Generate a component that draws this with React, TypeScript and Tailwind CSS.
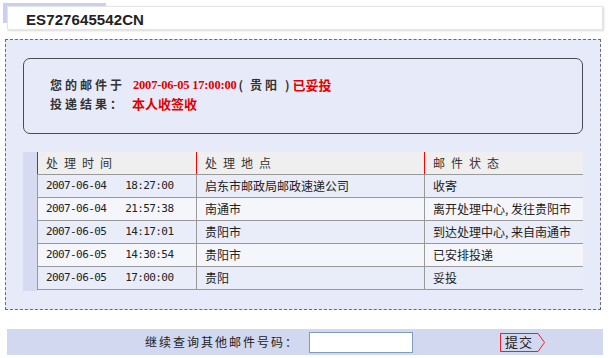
import React from "react";

const cjk = '"Noto Sans CJK SC", "DejaVu Sans", sans-serif';

const rows = [
  ["2007-06-04", "18:27:00", "启东市邮政局邮政速递公司", "收寄"],
  ["2007-06-04", "21:57:38", "南通市", "离开处理中心, 发往贵阳市"],
  ["2007-06-05", "14:17:01", "贵阳市", "到达处理中心, 来自南通市"],
  ["2007-06-05", "14:30:54", "贵阳市", "已安排投递"],
  ["2007-06-05", "17:00:00", "贵阳", "妥投"],
];

export default function App() {
  return (
    <div className="w-[609px] h-[358px] bg-white relative overflow-hidden" style={{ fontFamily: cjk }}>
      {/* header */}
      <div className="relative h-[39px]">
        <div className="absolute left-[3px] top-[3px] w-[103px] h-[20px] bg-[#c9cff0]" />
        <div className="absolute left-[7px] top-[6px] w-[596px] h-[24px] bg-white border border-[#e4e4e4] shadow-[1px_1px_2px_#d8d8d8] flex items-center pl-[18px] pt-[4px]">
          <span className="text-[15px] font-bold text-[#222] tracking-[0.1px]" style={{ fontFamily: '"Liberation Sans", Arial, sans-serif' }}>
            ES727645542CN
          </span>
        </div>
      </div>

      {/* dashed box */}
      <div className="ml-[5px] w-[596px] h-[271px] border border-dashed border-[#6b6b6b] bg-[#e7eaf8] pt-[18px] pl-[17px]">
        <div className="w-[560px] h-[76px] border border-[#4d4a52] rounded-[7px] pl-[26px] pt-[17px] text-[12px] font-bold text-[#333]">
          <div className="flex items-center h-[18px] whitespace-nowrap">
            <span className="tracking-[3px]">您的邮件于</span>
            <span className="ml-[8px] text-[#e00000] text-[12.5px] tracking-[-0.2px]" style={{ fontFamily: '"Liberation Serif", "Times New Roman", serif' }}>
              2007-06-05 17:00:00
            </span>
            <span className="ml-[2px]">(</span>
            <span className="ml-[7px] tracking-[3px]">贵阳</span>
            <span className="ml-[5px]">)</span>
            <span className="ml-[3px] text-[#e00000] text-[13px]">已妥投</span>
          </div>
          <div className="flex items-center h-[18px] mt-[1px] whitespace-nowrap">
            <span className="tracking-[3px]">投递结果：</span>
            <span className="ml-[7px] text-[#e00000] text-[13px]">本人收签收</span>
          </div>
        </div>

        <div className="flex mt-[18px]">
          <div className="w-[14px] h-[139px] bg-[#d6dbf1]" />
          <div className="w-[546px] text-[12px] text-[#222]">
            <div className="flex h-[23px] bg-[#efefef] border-b border-[#999]">
              <div className="w-[159px] border-l border-[#ff0000] pl-[8px] flex items-center tracking-[6px] text-[#333]">处理时间</div>
              <div className="w-[228px] border-l border-[#ff0000] pl-[8px] flex items-center tracking-[6px] text-[#333]">处理地点</div>
              <div className="flex-1 border-l border-[#ff0000] pl-[8px] flex items-center tracking-[6px] text-[#333]">邮件状态</div>
            </div>
            {rows.map((r, i) => (
              <div key={i} className={`flex h-[23px] border-b border-[#999] ${i % 2 === 0 ? "bg-[#e9ecf9]" : "bg-[#f5f6fc]"}`}>
                <div className="w-[159px] border-l border-[#999] pl-[8px] flex items-center" style={{ fontFamily: '"DejaVu Sans Mono", monospace', fontSize: "11px" }}>
                  <span className="tracking-[-0.6px]">{r[0]}</span>
                  <span className="ml-[19px] tracking-[-0.6px]">{r[1]}</span>
                </div>
                <div className="w-[228px] border-l border-[#999] pl-[8px] flex items-center">{r[2]}</div>
                <div className="flex-1 border-l border-[#999] pl-[8px] flex items-center whitespace-nowrap">{r[3]}</div>
              </div>
            ))}
          </div>
        </div>
      </div>

      {/* bottom bar */}
      <div className="ml-[7px] mt-[19px] w-[596px] h-[26px] bg-[#d1d8f0] flex items-center text-[12px] text-[#222]">
        <span className="ml-[138px] tracking-[2px]">继续查询其他邮件号码：</span>
        <div className="ml-[10px] w-[104px] h-[21px] bg-white border border-[#7f9db9]" />
        <div className="ml-[87px] relative w-[46px] h-[19px] flex items-center pl-[5px] tracking-[1px] text-[13px]">
          <svg className="absolute left-0 top-0" width="46" height="19" viewBox="0 0 46 19">
            <polygon points="0.5,0.5 38,0.5 44.5,9.5 38,18.5 0.5,18.5" fill="none" stroke="#e8202a" strokeWidth="1" />
          </svg>
          <span className="relative">提交</span>
        </div>
      </div>
    </div>
  );
}
